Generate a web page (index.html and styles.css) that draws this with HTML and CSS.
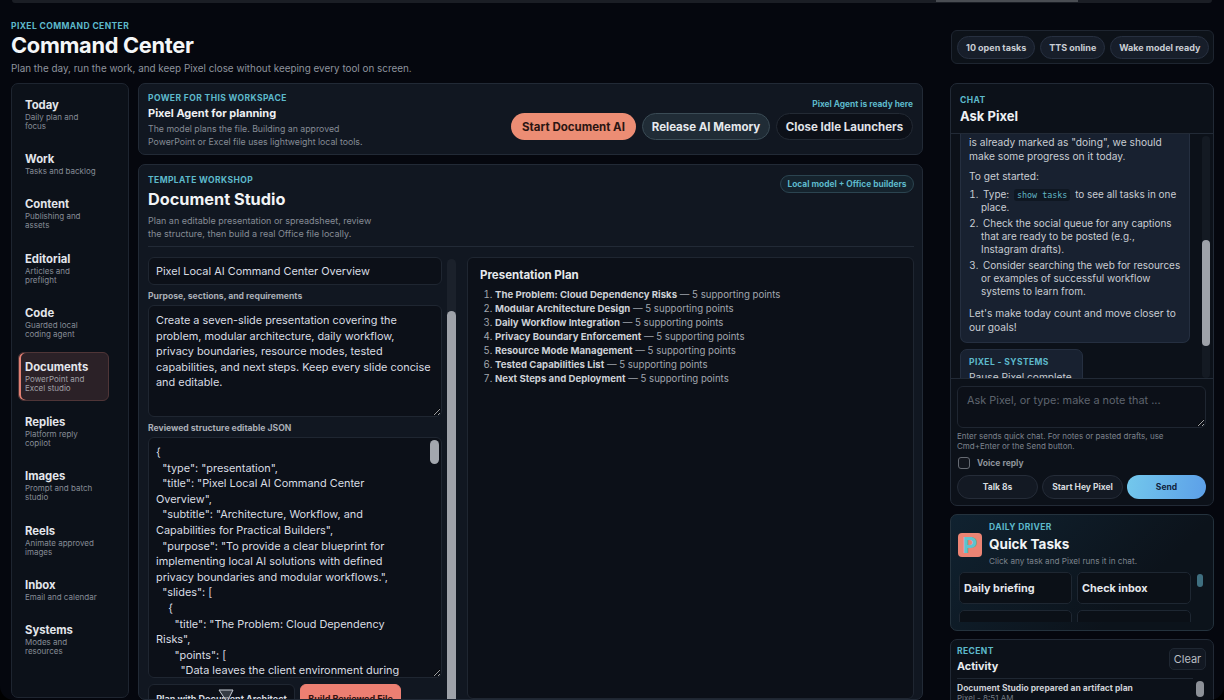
FILE: index.html
```html
<!DOCTYPE html>
<html lang="en">
<head>
<meta charset="utf-8">
<title>Command Center</title>
<link rel="stylesheet" href="styles.css">
</head>
<body>
<div class="app">
  <div class="strip"><span class="strip-thumb"></span></div>
  <div class="shell">
    <div class="left">
      <header class="page-head">
        <div class="eyebrow">PIXEL COMMAND CENTER</div>
        <h1>Command Center</h1>
        <p>Plan the day, run the work, and keep Pixel close without keeping every tool on screen.</p>
      </header>
      <div class="body">
        <nav class="nav">
          <a class="nav-item"><b>Today</b><span>Daily plan and focus</span></a>
          <a class="nav-item"><b>Work</b><span>Tasks and backlog</span></a>
          <a class="nav-item"><b>Content</b><span>Publishing and assets</span></a>
          <a class="nav-item"><b>Editorial</b><span>Articles and preflight</span></a>
          <a class="nav-item"><b>Code</b><span>Guarded local coding agent</span></a>
          <a class="nav-item active"><b>Documents</b><span>PowerPoint and Excel studio</span></a>
          <a class="nav-item"><b>Replies</b><span>Platform reply copilot</span></a>
          <a class="nav-item"><b>Images</b><span>Prompt and batch studio</span></a>
          <a class="nav-item"><b>Reels</b><span>Animate approved images</span></a>
          <a class="nav-item"><b>Inbox</b><span>Email and calendar</span></a>
          <a class="nav-item"><b>Systems</b><span>Modes and resources</span></a>
        </nav>
        <main class="center">
          <section class="card power">
            <div class="power-text">
              <div class="eyebrow">POWER FOR THIS WORKSPACE</div>
              <h3>Pixel Agent for planning</h3>
              <p>The model plans the file. Building an approved<br>PowerPoint or Excel file uses lightweight local tools.</p>
            </div>
            <div class="power-side">
              <div class="ready">Pixel Agent is ready here</div>
              <div class="power-btns">
                <button class="btn salmon">Start Document AI</button>
                <button class="btn slate">Release AI Memory</button>
                <button class="btn dark">Close Idle Launchers</button>
              </div>
            </div>
          </section>
          <section class="card workshop">
            <div class="work-head">
              <div>
                <div class="eyebrow">TEMPLATE WORKSHOP</div>
                <h2>Document Studio</h2>
                <p>Plan an editable presentation or spreadsheet, review<br>the structure, then build a real Office file locally.</p>
              </div>
              <span class="chip">Local model + Office builders</span>
            </div>
            <div class="work-cols">
              <div class="form">
                <input class="field title-field" value="Pixel Local AI Command Center Overview">
                <label class="lbl">Purpose, sections, and requirements</label>
                <textarea class="field purpose">Create a seven-slide presentation covering the problem, modular architecture, daily workflow, privacy boundaries, resource modes, tested capabilities, and next steps. Keep every slide concise and editable.</textarea>
                <label class="lbl">Reviewed structure editable JSON</label>
                <div class="json-wrap">
                  <textarea class="field json">{
  "type": "presentation",
  "title": "Pixel Local AI Command Center Overview",
  "subtitle": "Architecture, Workflow, and Capabilities for Practical Builders",
  "purpose": "To provide a clear blueprint for implementing local AI solutions with defined privacy boundaries and modular workflows.",
  "slides": [
    {
      "title": "The Problem: Cloud Dependency Risks",
      "points": [
        "Data leaves the client environment during</textarea>
                  <span class="json-thumb"></span>
                </div>
                <div class="form-btns">
                  <button class="fbtn plan">Plan with Document Architect</button>
                  <button class="fbtn build">Build Reviewed File</button>
                </div>
              </div>
              <div class="track form-track"><span class="thumb"></span></div>
              <div class="plan-panel">
                <h4>Presentation Plan</h4>
                <ol>
                  <li><b>The Problem: Cloud Dependency Risks</b> — 5 supporting points</li>
                  <li><b>Modular Architecture Design</b> — 5 supporting points</li>
                  <li><b>Daily Workflow Integration</b> — 5 supporting points</li>
                  <li><b>Privacy Boundary Enforcement</b> — 5 supporting points</li>
                  <li><b>Resource Mode Management</b> — 5 supporting points</li>
                  <li><b>Tested Capabilities List</b> — 5 supporting points</li>
                  <li><b>Next Steps and Deployment</b> — 5 supporting points</li>
                </ol>
              </div>
            </div>
          </section>
        </main>
      </div>
    </div>
    <aside class="right">
      <div class="status">
        <span class="pill">10 open tasks</span>
        <span class="pill">TTS online</span>
        <span class="pill">Wake model ready</span>
      </div>
      <section class="card chat">
        <div class="chat-head">
          <div class="eyebrow">CHAT</div>
          <h3>Ask Pixel</h3>
        </div>
        <div class="chat-mid">
          <div class="msgs">
            <div class="bubble">
              <p>is already marked as "doing", we should make some progress on it today.</p>
              <p>To get started:</p>
              <ol>
                <li>Type: <code>show tasks</code> to see all tasks in one place.</li>
                <li>Check the social queue for any captions that are ready to be posted (e.g., Instagram drafts).</li>
                <li>Consider searching the web for resources or examples of successful workflow systems to learn from.</li>
              </ol>
              <p>Let's make today count and move closer to our goals!</p>
            </div>
            <div class="bubble small">
              <div class="eyebrow">PIXEL - SYSTEMS</div>
              <p>Pause Pixel complete</p>
            </div>
          </div>
          <div class="track chat-track"><span class="thumb"></span></div>
        </div>
        <div class="composer">
          <textarea class="field ask" placeholder="Ask Pixel, or type: make a note that ..."></textarea>
          <p class="hint">Enter sends quick chat. For notes or pasted drafts, use Cmd+Enter or the Send button.</p>
          <label class="voice"><span class="check"></span>Voice reply</label>
          <div class="chat-btns">
            <button class="cbtn">Talk 8s</button>
            <button class="cbtn">Start Hey Pixel</button>
            <button class="cbtn send">Send</button>
          </div>
        </div>
      </section>
      <section class="card quick">
        <div class="quick-head">
          <div class="logo">P</div>
          <div>
            <div class="eyebrow">DAILY DRIVER</div>
            <h3>Quick Tasks</h3>
            <p>Click any task and Pixel runs it in chat.</p>
          </div>
        </div>
        <div class="quick-body">
          <div class="task-grid">
            <button class="task">Daily briefing</button>
            <button class="task">Check inbox</button>
            <button class="task">Check calendar</button>
            <button class="task"></button>
          </div>
          <span class="quick-thumb"></span>
        </div>
      </section>
      <section class="card activity">
        <div class="act-head">
          <div>
            <div class="eyebrow">RECENT</div>
            <h3>Activity</h3>
          </div>
          <button class="clear">Clear</button>
        </div>
        <div class="act-body">
          <div class="act-item">
            <b>Document Studio prepared an artifact plan</b>
            <span>Pixel - 8:51 AM</span>
          </div>
          <span class="act-thumb"></span>
        </div>
      </section>
    </aside>
  </div>
  <svg class="cursor" width="18" height="16" viewBox="0 0 18 16"><path d="M2 2 L16 2 L10 14 Z" fill="#59606a" fill-opacity=".55" stroke="#c9ced6" stroke-width="1"/></svg>
</div>
</body>
</html>
```
FILE: styles.css
```css
* { box-sizing: border-box; }
html, body { margin: 0; height: 100%; background: #000; }
body { font-family: Inter, "Liberation Sans", sans-serif; color: #dfe3e9; overflow: hidden; }
p, h1, h2, h3, h4, ol { margin: 0; padding: 0; }
button { font-family: inherit; cursor: pointer; }

.app { position: relative; width: 1224px; height: 700px; overflow: hidden; background: #05070e; border-radius: 0 0 14px 14px; padding: 0 10px 0 11px; display: flex; flex-direction: column; }
.strip { height: 3px; flex: none; margin: 0 2px 0 1px; background: #1b1e25; border-radius: 0 0 5px 5px; display: flex; padding-left: 924px; }
.strip-thumb { width: 142px; height: 2px; background: #4a4d53; }
.shell { flex: 1; min-height: 0; display: flex; gap: 27px; }
.left { width: 912px; flex: none; display: flex; flex-direction: column; min-height: 0; }
.right { width: 264px; flex: none; display: flex; flex-direction: column; padding-top: 27px; min-height: 0; }

.eyebrow { font-size: 8.5px; line-height: 11px; font-weight: 700; letter-spacing: .4px; color: #5db9cb; }
.page-head { height: 80px; padding-top: 18px; flex: none; }
.page-head h1 { font-size: 21.8px; line-height: 27px; font-weight: 700; color: #f4f6f8; letter-spacing: -.3px; }
.page-head p { font-size: 9.9px; line-height: 14px; color: #8d939d; margin-top: 2px; }

.body { flex: 1; min-height: 0; display: flex; gap: 9px; }
.nav { width: 118px; flex: none; height: 615px; background: #0c1119; border: 1px solid #1e2530; border-radius: 7px; padding: 5.5px 19px 0 6px; display: flex; flex-direction: column; gap: 5.4px; }
.nav-item { display: block; padding: 7px 8px 7px 6px; border: 1px solid transparent; border-radius: 6px; }
.nav-item b { display: block; font-size: 11.3px; line-height: 15px; font-weight: 700; color: #e3e6eb; }
.nav-item span { display: block; font-size: 8px; line-height: 9px; color: #868c96; margin-top: 0; }
.nav-item.active { background: #2b2127; border-color: #4f3537; box-shadow: inset 2px 0 0 #e27f72; }
.nav-item.active span { color: #a0a0a6; }

.card { background: #111721; border: 1px solid #222a36; border-radius: 7px; }
.center { width: 785px; flex: none; display: flex; flex-direction: column; gap: 9px; min-height: 0; }

.power { flex: none; height: 72px; display: flex; justify-content: space-between; padding: 9px 9px 0 9px; }
.power h3 { font-size: 11px; line-height: 15px; font-weight: 700; color: #eef0f3; margin-top: 2px; }
.power p { font-size: 8.75px; line-height: 12.5px; color: #858b95; margin-top: 2px; }
.power-side { display: flex; flex-direction: column; align-items: flex-end; }
.ready { font-size: 8.35px; line-height: 11px; font-weight: 700; color: #5db9cb; margin-top: 6px; }
.power-btns { display: flex; gap: 6px; margin-top: 3px; }
.btn { height: 27px; border-radius: 14px; font-size: 11.5px; font-weight: 700; padding: 0; border: 1px solid transparent; }
.salmon { width: 125px; background: #ec8d74; color: #2a1512; }
.slate { width: 128px; background: #202c36; border-color: #3a4b55; color: #e6e9ed; }
.dark { width: 137px; background: #0c1018; border-color: #232a34; color: #e0e3e8; }

.workshop { flex: 1; min-height: 0; padding: 10px 8px 0 9px; display: flex; flex-direction: column; overflow: hidden; }
.work-head { flex: none; height: 72px; display: flex; justify-content: space-between; align-items: flex-start; border-bottom: 1px solid #222a36; }
.work-head h2 { font-size: 16.3px; line-height: 22px; font-weight: 700; color: #f1f3f5; margin-top: 2px; }
.work-head p { font-size: 9px; line-height: 12.5px; color: #868c96; margin-top: 5px; }
.chip { font-size: 8.35px; line-height: 16px; font-weight: 700; color: #5db9cb; background: #15232d; border: 1px solid #2b4450; border-radius: 10px; padding: 0; width: 134px; text-align: center; white-space: nowrap; }
.work-cols { flex: 1; min-height: 0; display: flex; margin-top: 10px; }
.form { width: 294px; flex: none; display: flex; flex-direction: column; }
.field { display: block; width: 100%; background: #0c1018; border: 1px solid #1f2631; border-radius: 6px; color: #d9dde3; font-family: inherit; font-size: 10.9px; line-height: 15.6px; outline: none; }
.title-field { height: 28px; flex: none; padding: 0 7px; }
.lbl { display: block; font-size: 8.6px; line-height: 11px; font-weight: 700; color: #a9aeb6; flex: none; }
.form .lbl:nth-of-type(1) { margin-top: 6px; margin-bottom: 3px; }
.purpose { height: 112px; flex: none; resize: vertical; padding: 7px 6px 7px 7px; }
.form .lbl:nth-of-type(2) { margin-top: 6px; margin-bottom: 3px; }
.json-wrap { position: relative; height: 241px; flex: none; }
.json { height: 100%; resize: vertical; padding: 7px 30px 0 7px; overflow: hidden; scrollbar-width: none; }
.json-thumb { position: absolute; right: 3px; top: 3px; width: 9px; height: 24px; border-radius: 5px; background: #a3a7ae; }
.form-btns { display: flex; gap: 5px; margin-top: 6px; flex: none; }
.fbtn { height: 28px; font-size: 9px; font-weight: 700; border-radius: 6px; border: 1px solid #1f2631; padding: 0; white-space: nowrap; }
.plan { width: 147px; background: #0c1018; color: #d8dce2; }
.build { width: 101px; background: #ec7f72; color: #34120f; border-color: #ec7f72; }

.track { flex: none; background: #1b212b; border-radius: 5px; }
.thumb { display: block; background: #9ea2a9; border-radius: 5px; }
.form-track { width: 9px; margin: 2px 11px 0 5px; padding-top: 52px; }
.form-track .thumb { height: 400px; }
.plan-panel { width: 447px; flex: none; background: #0c1018; border: 1px solid #1f2631; border-radius: 6px; padding: 10px 12px; }
.plan-panel h4 { font-size: 11.5px; line-height: 14px; font-weight: 700; color: #e6e9ed; }
.plan-panel ol { margin-top: 6px; padding-left: 15px; font-size: 9.65px; line-height: 14px; color: #a2a7af; }
.plan-panel li b { color: #cdd1d7; font-weight: 700; }

.status { height: 34px; flex: none; margin-left: 1px; background: #0d1219; border: 1px solid #1e2530; border-radius: 6px; display: flex; align-items: center; gap: 5px; padding-left: 5px; margin-bottom: 19px; }
.pill { height: 23px; line-height: 21px; font-size: 9px; font-weight: 700; color: #c9cdd4; background: #171e2a; border: 1px solid #273040; border-radius: 12px; padding: 0 8px; white-space: nowrap; }

.chat { height: 423px; flex: none; display: flex; flex-direction: column; overflow: hidden; background: #0c1119; }
.chat-head { height: 50px; flex: none; border-bottom: 1px solid #222a36; padding: 11px 9px 0; }
.chat-head h3 { font-size: 13px; line-height: 18px; font-weight: 700; color: #eef0f3; margin-top: 1px; }
.chat-mid { height: 244px; flex: none; display: flex; padding-left: 9px; overflow: hidden; }
.msgs { width: 230px; flex: none; }
.bubble { background: #182130; border: 1px solid #252f40; border-radius: 0 0 7px 7px; border-top: 0; padding: 1px 6px 8px 8px; font-size: 10.2px; line-height: 14px; color: #c9cdd3; }
.bubble p { margin-bottom: 6px; }
.bubble p:last-child { margin-bottom: 0; }
.bubble ol { padding-left: 12px; margin-top: -1px; margin-bottom: 7.5px; list-style-position: outside; }
.bubble li { margin-bottom: 3px; font-size: 9.95px; line-height: 13px; text-indent: 2px; }
.bubble code { font-family: "DejaVu Sans Mono", monospace; font-size: 8.4px; line-height: 1; color: #62b6c4; background: #0f1722; padding: 1px 3px; border-radius: 3px; margin: 0 2px; }
.bubble.small { width: 123px; margin-top: 6px; border-top: 1px solid #252f40; border-radius: 7px; padding-top: 7px; }
.bubble.small p { margin-top: 2px; white-space: nowrap; }
.chat-track { width: 8px; margin: 2px 0 0 12px; padding-top: 104px; background: #141a23; height: 242px; }
.chat-track .thumb { height: 106px; }
.composer { flex: 1; border-top: 1px solid #222a36; padding: 7px 7px 0 6px; }
.ask { height: 42px; resize: vertical; padding: 6px 9px; color: #d9dde3; background: #0c1018; }
.ask::placeholder { color: #5e646e; }
.hint { font-size: 8px; line-height: 9.5px; color: #7d838d; margin-top: 4px; }
.voice { display: flex; align-items: center; gap: 7px; font-size: 8.5px; font-weight: 700; color: #8f949c; margin-top: 5px; height: 13px; padding-left: 1px; }
.check { width: 12px; height: 12px; border: 1px solid #666b73; border-radius: 3px; background: #12161e; }
.chat-btns { display: flex; gap: 4px; margin-top: 6px; }
.cbtn { flex: 1; height: 24px; border-radius: 12px; background: #131923; border: 1px solid #252c38; color: #d5d9de; font-size: 8.5px; font-weight: 700; padding: 0; }
.cbtn.send { background: linear-gradient(100deg, #73c8ec, #5c9fe8); border: 0; color: #10233d; }

.quick { height: 117px; flex: none; margin-top: 8px; background: linear-gradient(135deg, #102230, #0c131b 70%); overflow: hidden; padding: 7px 8px 0 7px; border-color: #24323d; }
.quick-head { display: flex; gap: 7px; }
.logo { width: 24px; height: 24px; flex: none; margin-top: 11px; border-radius: 4px; background: #ec8474; color: #5ec3cf; font-size: 22px; line-height: 24px; font-weight: 800; text-align: center; }
.quick h3 { font-size: 13.5px; line-height: 18px; font-weight: 700; color: #f1f3f5; margin-top: 2px; }
.quick p { font-size: 8.2px; line-height: 11px; color: #7c838c; margin-top: 3px; }
.quick-body { display: flex; gap: 6px; height: 50px; margin-top: 5px; overflow: hidden; margin-left: 1px; }
.task-grid { width: 232px; flex: none; display: grid; grid-template-columns: 113px 114px; gap: 6px 5px; grid-auto-rows: 32px; }
.task { background: #0b1017; border: 1px solid #1e2732; border-radius: 5px; color: #e4e7eb; font-size: 10.8px; font-weight: 700; text-align: left; padding: 0 4px; }
.quick-thumb { width: 6px; height: 13px; margin-top: 2px; border-radius: 3px; background: #3f6f80; }

.activity { height: 70px; flex: none; margin-top: 8px; background: #0c1119; padding: 6px 7px 0 6px; overflow: hidden; }
.act-head { display: flex; justify-content: space-between; align-items: flex-start; height: 32px; width: 249px; }
.act-head h3 { font-size: 10.8px; line-height: 15px; font-weight: 700; color: #e9ecef; margin-top: 2px; }
.clear { width: 37px; height: 22px; margin-top: 2px; background: #121822; border: 1px solid #1f2732; border-radius: 5px; color: #b9bdc4; font-size: 11px; padding: 0; }
.act-body { display: flex; justify-content: space-between; width: 247px; }
.act-item { flex: 1; border-top: 1px solid #1f2732; margin-right: 3px; padding-top: 4px; }
.act-item b { display: block; font-size: 8.5px; line-height: 11px; font-weight: 700; color: #ccd0d6; white-space: nowrap; }
.act-item span { display: block; font-size: 8px; line-height: 9px; color: #757b85; }
.act-thumb { width: 8px; height: 16px; margin-top: 3px; border-radius: 4px; background: #8d9198; flex: none; }

.cursor { position: absolute; left: 217px; top: 688px; }
```
